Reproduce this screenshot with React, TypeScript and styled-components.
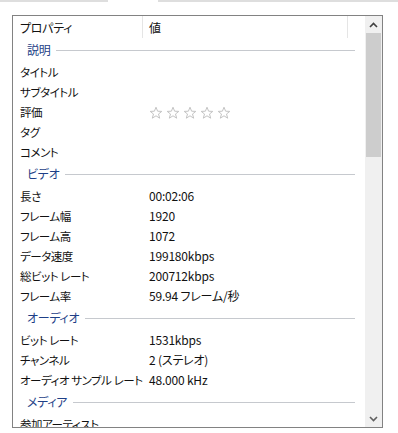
import React from "react";
import styled, { createGlobalStyle } from "styled-components";

type Row =
  | { kind: "section"; label: string }
  | { kind: "item"; label: string; value?: string; stars?: boolean };

const rows: Row[] = [
  { kind: "section", label: "説明" },
  { kind: "item", label: "タイトル" },
  { kind: "item", label: "サブタイトル" },
  { kind: "item", label: "評価", stars: true },
  { kind: "item", label: "タグ" },
  { kind: "item", label: "コメント" },
  { kind: "section", label: "ビデオ" },
  { kind: "item", label: "長さ", value: "00:02:06" },
  { kind: "item", label: "フレーム幅", value: "1920" },
  { kind: "item", label: "フレーム高", value: "1072" },
  { kind: "item", label: "データ速度", value: "199180kbps" },
  { kind: "item", label: "総ビット レート", value: "200712kbps" },
  { kind: "item", label: "フレーム率", value: "59.94 フレーム/秒" },
  { kind: "section", label: "オーディオ" },
  { kind: "item", label: "ビット レート", value: "1531kbps" },
  { kind: "item", label: "チャンネル", value: "2 (ステレオ)" },
  { kind: "item", label: "オーディオ サンプル レート", value: "48.000 kHz" },
  { kind: "section", label: "メディア" },
  { kind: "item", label: "参加アーティスト" },
];

const Star = () => (
  <svg width="14" height="14" viewBox="0 0 14 14">
    <path
      d="M7 1.2 L8.6 5.2 L12.8 5.4 L9.5 8 L10.7 12.2 L7 9.8 L3.3 12.2 L4.5 8 L1.2 5.4 L5.4 5.2 Z"
      fill="none"
      stroke="#c4c4c4"
      strokeWidth="1"
      strokeLinejoin="round"
    />
  </svg>
);

const Chevron = ({ up }: { up?: boolean }) => (
  <svg width="9" height="6" viewBox="0 0 9 6">
    <path
      d={up ? "M1 5 L4.5 1.5 L8 5" : "M1 1 L4.5 4.5 L8 1"}
      fill="none"
      stroke={up ? "#404040" : "#606060"}
      strokeWidth="1.6"
    />
  </svg>
);

export default function App() {
  return (
    <>
      <GlobalStyle />
      <TopStrip>
        <StripPart $width={108} />
        <StripGap />
        <StripPart />
      </TopStrip>
      <Panel>
        <List>
          <Header>
            <HeaderCell>プロパティ</HeaderCell>
            <HeaderCell>値</HeaderCell>
            <HeaderCell />
          </Header>
          {rows.map((row, i) =>
            row.kind === "section" ? (
              <SectionRow key={i}>
                <SectionLabel>{row.label}</SectionLabel>
                <SectionLine />
              </SectionRow>
            ) : (
              <ItemRow key={i}>
                <ItemLabel>{row.label}</ItemLabel>
                <ItemValue>
                  {row.stars ? (
                    <Stars>
                      {[0, 1, 2, 3, 4].map((s) => (
                        <Star key={s} />
                      ))}
                    </Stars>
                  ) : (
                    row.value
                  )}
                </ItemValue>
              </ItemRow>
            )
          )}
        </List>
        <Scrollbar>
          <ScrollButton>
            <Chevron up />
          </ScrollButton>
          <Track>
            <Thumb />
          </Track>
          <ScrollButton>
            <Chevron />
          </ScrollButton>
        </Scrollbar>
      </Panel>
    </>
  );
}

const GlobalStyle = createGlobalStyle`
  body {
    margin: 0;
    background: #ffffff;
    font-family: "Noto Sans CJK JP", "Noto Sans", sans-serif;
    font-size: 12px;
    color: #111111;
    font-feature-settings: "palt";
  }
`;

const TopStrip = styled.div`
  display: flex;
  height: 2px;
`;

const StripPart = styled.div<{ $width?: number }>`
  background: #dedede;
  ${({ $width }) => ($width ? `width: ${$width}px;` : "flex: 1;")}
`;

const StripGap = styled.div`
  width: 50px;
`;

const Panel = styled.div`
  display: flex;
  margin: 13px 0 0 12px;
  width: 371px;
  height: 413px;
  box-sizing: border-box;
  border: 1px solid #828282;
  overflow: hidden;
`;

const List = styled.div`
  flex: 1;
  display: flex;
  flex-direction: column;
  overflow: hidden;
`;

const Header = styled.div`
  display: grid;
  grid-template-columns: 130px 205px 1fr;
  height: 22px;
  flex-shrink: 0;
`;

const HeaderCell = styled.div`
  display: flex;
  align-items: center;
  padding-left: 7px;
  padding-top: 2px;
  border-right: 1px solid #e5e5e5;
  line-height: 16px;
  letter-spacing: -0.3px;

  & + & {
    padding-left: 6px;
  }
  &:last-child {
    border-right: none;
  }
`;

const SectionRow = styled.div`
  display: flex;
  align-items: center;
  height: 24px;
  flex-shrink: 0;
  padding: 0 10px 0 14px;
`;

const SectionLabel = styled.span`
  color: #1e3f87;
  line-height: 16px;
  letter-spacing: -0.3px;
`;

const SectionLine = styled.div`
  flex: 1;
  height: 1px;
  margin-left: 6px;
  background: #c6c9ce;
`;

const ItemRow = styled.div`
  display: grid;
  grid-template-columns: 130px 1fr;
  height: 20px;
  flex-shrink: 0;
  align-items: center;
`;

const ItemLabel = styled.span`
  padding-left: 7px;
  font-size: 11.5px;
  line-height: 16px;
  letter-spacing: -0.45px;
  white-space: nowrap;
`;

const ItemValue = styled.span`
  padding-left: 6px;
  line-height: 16px;
  white-space: nowrap;
  letter-spacing: -0.2px;
`;

const Stars = styled.span`
  display: flex;
  gap: 3px;
  padding-top: 1px;
`;

const Scrollbar = styled.div`
  width: 17px;
  display: flex;
  flex-direction: column;
  background: #f0f0f0;
`;

const ScrollButton = styled.div`
  height: 17px;
  display: flex;
  align-items: center;
  justify-content: center;
  flex-shrink: 0;
`;

const Track = styled.div`
  flex: 1;
  padding: 0 1px;
`;

const Thumb = styled.div`
  height: 124px;
  background: #cdcdcd;
`;
